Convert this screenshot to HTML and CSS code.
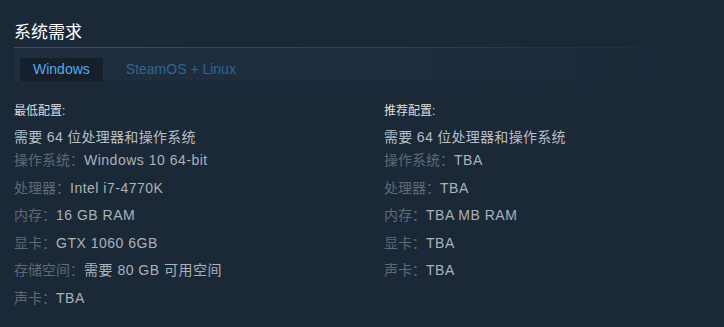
FILE: index.html
```html
<!DOCTYPE html>
<html lang="zh-CN">
<head>
<meta charset="UTF-8">
<meta name="viewport" content="width=device-width, initial-scale=1.0">
<title>系统需求</title>
<link rel="stylesheet" href="styles.css">
</head>
<body>

<div class="sysreq">
  <h2 class="sysreq-title">系统需求</h2>

  <div class="sysreq-tabs">
    <div class="sysreq-tab active">Windows</div>
    <div class="sysreq-tab">SteamOS + Linux</div>
  </div>

  <div class="sysreq-contents">
    <div class="sysreq-col">
      <div class="sysreq-head">最低配置:</div>
      <ul class="req-list">
        <li class="req-note">需要 64 位处理器和操作系统</li>
        <li><span class="req-label">操作系统：</span>Windows 10 64-bit</li>
        <li><span class="req-label">处理器：</span>Intel i7-4770K</li>
        <li><span class="req-label">内存：</span>16 GB RAM</li>
        <li><span class="req-label">显卡：</span>GTX 1060 6GB</li>
        <li><span class="req-label">存储空间：</span>需要 80 GB 可用空间</li>
        <li><span class="req-label">声卡：</span>TBA</li>
      </ul>
    </div>

    <div class="sysreq-col">
      <div class="sysreq-head">推荐配置:</div>
      <ul class="req-list">
        <li class="req-note">需要 64 位处理器和操作系统</li>
        <li><span class="req-label">操作系统：</span>TBA</li>
        <li><span class="req-label">处理器：</span>TBA</li>
        <li><span class="req-label">内存：</span>TBA MB RAM</li>
        <li><span class="req-label">显卡：</span>TBA</li>
        <li><span class="req-label">声卡：</span>TBA</li>
      </ul>
    </div>
  </div>
</div>

</body>
</html>
```

FILE: styles.css
```css
body {
    margin: 0;
    padding: 0;
    background-color: #1b2838;
    font-family: "Liberation Sans", Arial, "Noto Sans CJK SC", sans-serif;
    color: #acb2b8;
}

.sysreq {
    padding: 21px 22px 0 14px;
}

.sysreq-title {
    margin: 0 0 2px 0;
    font-size: 17px;
    font-weight: normal;
    line-height: 24px;
    color: #ffffff;
}

.sysreq-tabs {
    display: flex;
    gap: 10px;
    padding: 11px 6px 0 6px;
    background:
        linear-gradient(to right, #30506b 0%, #2a4760 50%, #1b2838 100%) top left / 100% 1px no-repeat,
        linear-gradient(to right, #1f2e3f 0%, #1e2c3d 60%, #1b2838 100%);
}

.sysreq-tab {
    padding: 3px 13px;
    font-size: 14px;
    line-height: 17px;
    color: #2f6690;
}

.sysreq-tab.active {
    background-color: #16202d;
    color: #58aae6;
}

.sysreq-contents {
    display: grid;
    grid-template-columns: 370px 1fr;
    margin-top: 21px;
}

.sysreq-head {
    font-size: 12px;
    line-height: 18px;
    color: #dcdedf;
    margin-bottom: 8px;
}

.req-list {
    list-style: none;
    margin: 0;
    padding: 0;
}

.req-list li {
    font-size: 14px;
    line-height: 18px;
    letter-spacing: 0.5px;
    margin-bottom: 9.5px;
}

.req-list li.req-note {
    margin-bottom: 5px;
    letter-spacing: 0.3px;
    color: #b8bec4;
}

.req-label {
    letter-spacing: 0;
    color: #5f6a75;
}
```
